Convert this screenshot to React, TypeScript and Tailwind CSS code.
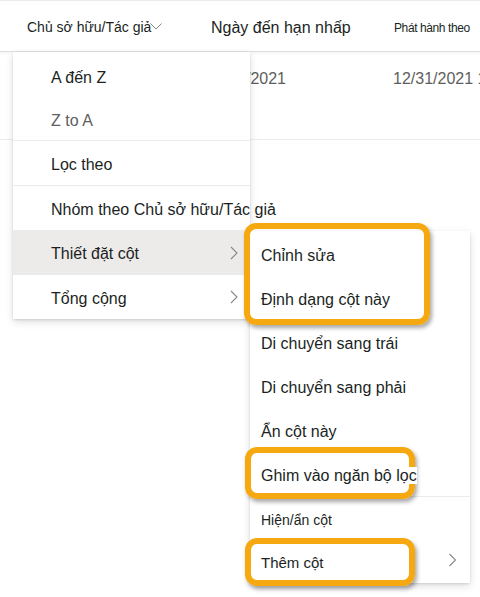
import React from "react";

const font = { fontFamily: '"Liberation Sans", Arial, sans-serif' };

function Chevron({ className }: { className?: string }) {
  return (
    <svg viewBox="0 0 8 14" className={className} fill="none">
      <path d="M1 1l6 6-6 6" stroke="#8a8886" strokeWidth="1.1" />
    </svg>
  );
}

function DownChevron({ className }: { className?: string }) {
  return (
    <svg viewBox="0 0 12 7" className={className} fill="none">
      <path d="M0.5 0.5L6 6l5.5-5.5" stroke="#8a8886" strokeWidth="1" />
    </svg>
  );
}

function Item({
  label,
  h = "h-11",
  muted,
  active,
  sub,
}: {
  label: string;
  h?: string;
  muted?: boolean;
  active?: boolean;
  sub?: boolean;
}) {
  return (
    <div
      className={`flex items-center ${h} pl-[38px] pr-[12px] pt-[3px] text-[16px] ${
        active ? "bg-[#edebe9]" : ""
      } ${muted ? "text-[#605e5c]" : "text-[#201f1e]"}`}
    >
      <span className="flex-1 whitespace-nowrap">{label}</span>
      {sub && <Chevron className="w-[8px] h-[14px] -mt-[3px]" />}
    </div>
  );
}

function SubItem({
  label,
  h = "h-11",
  size = "text-[16px]",
  sub,
  onTop,
}: {
  label: string;
  h?: string;
  size?: string;
  sub?: boolean;
  onTop?: boolean;
}) {
  return (
    <div className={`flex items-center ${h} pl-[11px] pr-[13px] pt-[2px] ${size} text-[#201f1e]`}>
      <span className="flex-1 whitespace-nowrap">
        <span className={onTop ? "relative z-10 bg-white" : ""}>{label}</span>
      </span>
      {sub && <Chevron className="w-[9px] h-[14px] -mt-[6px]" />}
    </div>
  );
}

function Highlight({ className }: { className: string }) {
  return (
    <div
      className={`absolute border-[6px] border-[#f5a80f] rounded-[12px] shadow-[2px_3px_4px_rgba(0,0,0,0.35)] ${className}`}
    />
  );
}

export default function App() {
  return (
    <div className="relative w-[480px] h-[597px] bg-white overflow-hidden" style={font}>
      {/* table header */}
      <div className="flex items-center h-[52px] border-t border-[#edebe9] border-b border-b-[#e1dfdd] shadow-[0_1px_3px_rgba(0,0,0,0.06)] pt-[3px] text-[#201f1e]">
        <div className="w-[211px] shrink-0 pl-[27px] flex items-center text-[14px] whitespace-nowrap">
          <span>Chủ sở hữu/Tác giả</span>
          <DownChevron className="w-[12px] h-[7px] -ml-[1px] mb-[2px]" />
        </div>
        <div className="w-[183px] shrink-0 relative flex items-center text-[16px] whitespace-nowrap">
          <span>Ngày đến hạn nhấp</span>
          <DownChevron className="absolute left-[126px] top-[5px] w-[9px] h-[5px] opacity-60" />
        </div>
        <div className="flex-1 text-[12px] tracking-[-0.4px] whitespace-nowrap overflow-hidden">
          Phát hành theo
        </div>
      </div>

      {/* first row */}
      <div className="flex h-[88px] border-b border-[#edebe9] pt-[15px] text-[16px] text-[#605e5c] whitespace-nowrap">
        <div className="w-[286px] shrink-0 text-right">/2021</div>
        <div className="shrink-0 pl-[107px]">12/31/2021 1</div>
      </div>

      {/* column menu */}
      <div className="absolute left-[13px] top-[52px] w-[237px] bg-white shadow-[0_3px_8px_rgba(0,0,0,0.13),0_0.6px_2px_rgba(0,0,0,0.11)] pt-[2px]">
        <Item label="A đến Z" />
        <Item label="Z to A" h="h-[42px]" muted />
        <div className="h-px bg-[#edebe9]" />
        <Item label="Lọc theo" />
        <div className="h-px bg-[#edebe9]" />
        <Item label="Nhóm theo Chủ sở hữu/Tác giả" />
        <Item label="Thiết đặt cột" h="h-[45px]" active sub />
        <Item label="Tổng cộng" sub />
      </div>

      {/* column settings submenu */}
      <div className="absolute left-[250px] top-[231px] w-[220px] bg-white shadow-[0_3px_8px_rgba(0,0,0,0.13),0_0.6px_2px_rgba(0,0,0,0.11)] pt-[2px]">
        <SubItem label="Chỉnh sửa" />
        <SubItem label="Định dạng cột này" />
        <SubItem label="Di chuyển sang trái" />
        <SubItem label="Di chuyển sang phải" />
        <SubItem label="Ẩn cột này" />
        <SubItem label="Ghim vào ngăn bộ lọc" h="h-[43px]" onTop />
        <div className="h-px bg-[#edebe9]" />
        <SubItem label="Hiện/ẩn cột" size="text-[14px]" />
        <SubItem label="Thêm cột" size="text-[15px]" h="h-[42px]" sub />
      </div>

      {/* callouts */}
      <Highlight className="left-[244px] top-[223px] w-[186px] h-[102px]" />
      <Highlight className="left-[245px] top-[447px] w-[170px] h-[52px]" />
      <Highlight className="left-[245px] top-[538px] w-[170px] h-[48px]" />
    </div>
  );
}
